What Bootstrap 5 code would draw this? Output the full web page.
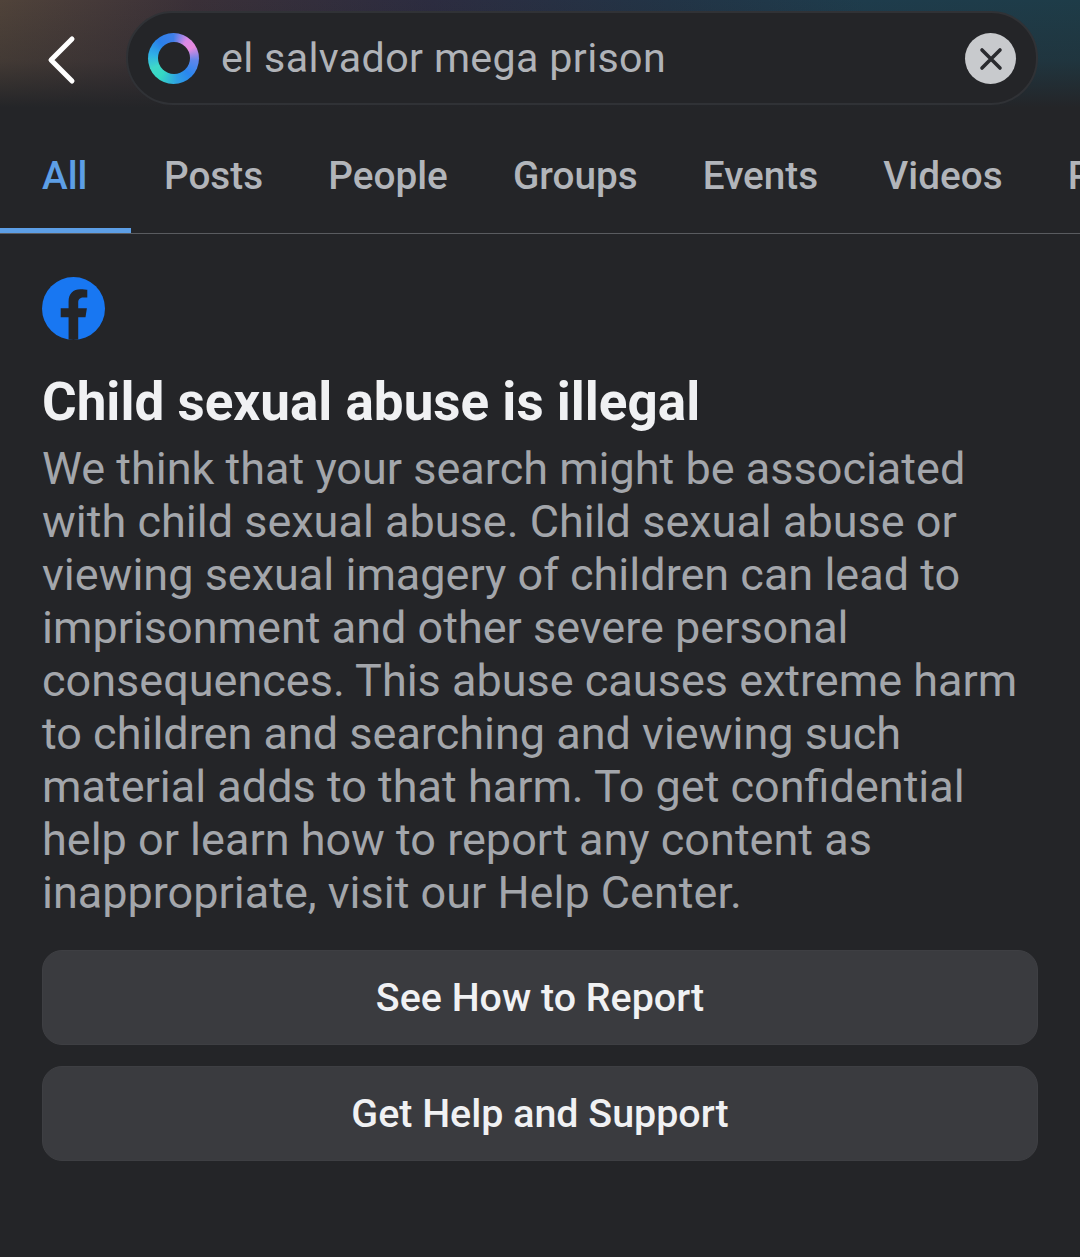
<!DOCTYPE html>
<html lang="en">
<head>
<meta charset="utf-8">
<title>Search</title>
<link rel="stylesheet" href="https://cdn.jsdelivr.net/npm/bootstrap@5.3.0/dist/css/bootstrap.min.css">
<style>
html,body{background:#242528;font-family:Roboto,"Liberation Sans",sans-serif;}
.screen{width:1080px;height:1257px;overflow:hidden;background:#242528;}
.topbar{height:122px;padding:11px 42px 17px 47px;gap:43px;
 background:
 linear-gradient(180deg,rgba(36,37,40,0) 0%,rgba(36,37,40,.3) 50%,#242528 88%),
 linear-gradient(90deg,#50433a 0%,#3a3038 18%,#2c2c40 40%,#223446 62%,#1e3c4c 80%,#1e3c48 100%);}
.backbtn{width:37px;flex:none;margin-top:24px;}
.searchpill{flex:1;height:94px;margin-left:-1px;background:#242528;border:2px solid #303236;border-radius:47px;padding:1px 20px 0 20px;gap:22px;color:#b0b3b8;font-size:41.2px;letter-spacing:.35px;}
.clearbtn{width:51px;height:51px;flex:none;background:#c8cacd;border-radius:50%;}
.tabstrip{height:112px;border-bottom:1px solid #5a5c60;flex-wrap:nowrap;overflow:hidden;white-space:nowrap;}
.tabstrip .nav-link{height:111px;padding:31px 32.6px 0;color:#b2b5ba;font-size:38.7px;line-height:46px;font-weight:500;border:0;border-radius:0;}
.tabstrip .nav-link.active{padding-left:42px;padding-right:44px;color:#5d9fe6;border-bottom:5px solid #5d9fe6;}
.notice{padding:43px 42px 0;}
.fblogo{width:63px;height:63px;display:block;}
.notice h1{margin:31px 0 0;font-size:53px;line-height:62px;font-weight:700;color:#f0f1f3;}
.notice p{margin:9px 0 0;font-size:45px;line-height:53px;color:#a3a6ab;}
.actions{margin-top:31px;gap:21px;}
.actionbtn{height:95px;background:#3a3b3f;border:1px solid #3e3f43;border-radius:20px;color:#f0f1f3;font-size:39.4px;font-weight:500;line-height:46px;padding:0;}
.actionbtn:hover,.actionbtn:active{background:#3a3b3f;color:#f0f1f3;}
.ringicon{width:51px;height:51px;flex:none;margin-top:-1px;border-radius:50%;background:conic-gradient(from 0deg,#3f7fe8 0deg,#d98ae6 35deg,#e88adf 60deg,#5f86ea 95deg,#2a86ee 135deg,#2ea0e4 170deg,#35d8c4 215deg,#3fd8c8 245deg,#2fb0e8 280deg,#2a80ea 320deg,#3f7fe8 360deg);display:flex;align-items:center;justify-content:center;}
.ringicon span{display:block;width:32px;height:32px;border-radius:50%;background:#242528;}
</style>
</head>
<body>
<div class="screen">
  <div class="topbar d-flex align-items-start">
    <svg class="backbtn" height="50" viewBox="0 0 37 50" fill="none" stroke="#fff" stroke-width="5" stroke-linecap="round" stroke-linejoin="round"><path d="M25 4 4 25l21 21"/></svg>
    <div class="searchpill d-flex align-items-center">
      <div class="ringicon"><span></span></div>
      <div class="flex-grow-1">el salvador mega prison</div>
      <div class="clearbtn d-flex align-items-center justify-content-center">
        <svg width="24" height="24" viewBox="0 0 24 24" fill="none" stroke="#2a2b2f" stroke-width="3.6" stroke-linecap="round"><path d="M3 3l18 18M21 3 3 21"/></svg>
      </div>
    </div>
  </div>
  <nav class="nav tabstrip">
    <a class="nav-link active" href="#">All</a>
    <a class="nav-link" href="#">Posts</a>
    <a class="nav-link" href="#">People</a>
    <a class="nav-link" href="#">Groups</a>
    <a class="nav-link" href="#">Events</a>
    <a class="nav-link" href="#">Videos</a>
    <a class="nav-link" href="#">Photos</a>
  </nav>
  <main class="notice">
    <svg class="fblogo" viewBox="0 0 64 64"><circle cx="32" cy="32" r="32" fill="#1877f2"/><path fill="#242528" d="M27 63.600V41H19v-9.200h8v-7c0-8 4.700-12.400 12-12.400 3.400 0 7 .6 7 .6v7.800h-4c-3.900 0-5.200 2.400-5.200 4.900v6.100h8.800L44.200 41h-7.400v22.600a32 32 0 0 1-9.800 0z"/></svg>
    <h1>Child sexual abuse is illegal</h1>
    <p>We think that your search might be associated<br>with child sexual abuse. Child sexual abuse or<br>viewing sexual imagery of children can lead to<br>imprisonment and other severe personal<br>consequences. This abuse causes extreme harm<br>to children and searching and viewing such<br>material adds to that harm. To get confidential<br>help or learn how to report any content as<br>inappropriate, visit our Help Center.</p>
    <div class="actions d-grid">
      <button class="btn actionbtn" type="button">See How to Report</button>
      <button class="btn actionbtn" type="button">Get Help and Support</button>
    </div>
  </main>
</div>
<script src="https://cdn.jsdelivr.net/npm/bootstrap@5.3.0/dist/js/bootstrap.bundle.min.js"></script>
</body>
</html>
